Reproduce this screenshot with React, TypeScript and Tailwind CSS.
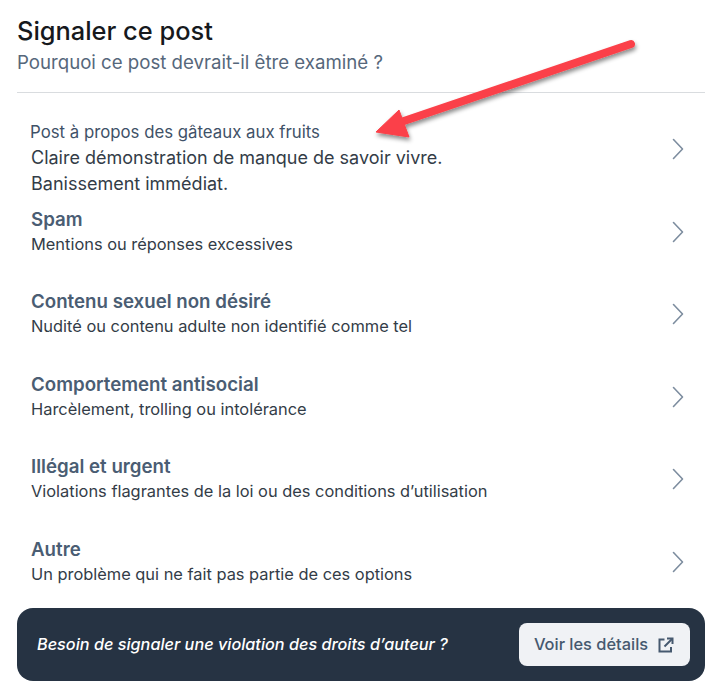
import React from "react";

const rows = [
  ["Spam", "Mentions ou réponses excessives"],
  ["Contenu sexuel non désiré", "Nudité ou contenu adulte non identifié comme tel"],
  ["Comportement antisocial", "Harcèlement, trolling ou intolérance"],
  ["Illégal et urgent", "Violations flagrantes de la loi ou des conditions d’utilisation"],
  ["Autre", "Un problème qui ne fait pas partie de ces options"],
];

function Chevron({ className }: { className: string }) {
  return (
    <svg width="24" height="24" viewBox="0 0 24 24" fill="none" stroke="#7d8d9f" strokeWidth="1.6" strokeLinecap="round" strokeLinejoin="round" className={className}>
      <path d="M7.5 2.5 L16.5 12 L7.5 21.5" />
    </svg>
  );
}

export default function App() {
  return (
    <div className="relative w-[719px] h-[696px] bg-white overflow-hidden font-['Inter',sans-serif] px-[17px] pt-[15px]">
      <h1 className="text-[25.4px] leading-[32px] font-medium text-[#16191d]">Signaler ce post</h1>
      <p className="text-[18.65px] leading-[26px] mt-[2px] text-[#56677b]">Pourquoi ce post devrait-il être examiné ?</p>
      <div className="h-px bg-[#d9dcdf] mt-[17px] w-[688px]" />

      <div className="flex items-center pl-[14px] pr-[12px] mt-[16px] h-[81px]">
        <div className="flex-1 self-start pt-[11px]">
          <div className="text-[16.8px] leading-[25px] text-[#3f5268] -ml-px">Post à propos des gâteaux aux fruits</div>
          <div className="text-[18px] leading-[26px] text-[#333c47]">Claire démonstration de manque de savoir vivre.</div>
          <div className="text-[18px] leading-[26px] text-[#333c47]">Banissement immédiat.</div>
        </div>
        <Chevron className="shrink-0 mb-[2px]" />
      </div>

      <div className="flex flex-col">
        {rows.map(([t, d]) => (
          <div key={t} className="flex items-center pl-[14px] pr-[12px] h-[82.5px]">
            <div className="flex-1">
              <div className="text-[18.7px] leading-[26px] font-semibold text-[#4a5d73]">{t}</div>
              <div className="text-[16.4px] leading-[23px] text-[#333c47]">{d}</div>
            </div>
            <Chevron className="shrink-0 mt-[1px]" />
          </div>
        ))}
      </div>

      <div className="flex items-center justify-between h-[73px] w-[688px] rounded-[16px] bg-[#263343] pl-[20px] pr-[15px] absolute left-[17px] top-[608px]">
        <span className="text-[16.25px] italic font-medium text-white [font-feature-settings:'cv11']">Besoin de signaler une violation des droits d’auteur ?</span>
        <div className="flex items-center gap-[9px] h-[43px] w-[171px] justify-center rounded-[8px] bg-[#f0f2f5] text-[#46596f] text-[16.4px] font-medium">
          Voir les détails
          <svg width="18" height="18" viewBox="0 0 18 18" fill="none" stroke="#46596f" strokeWidth="2">
            <path d="M7.5 3.5 H2.5 V15.5 H14 V11" />
            <path d="M7.5 10.5 L15 3" />
            <path d="M10 2.5 H15.5 V8" />
          </svg>
        </div>
      </div>

      <svg className="absolute left-0 top-0 pointer-events-none" width="719" height="696" viewBox="0 0 719 696" fill="none">
        <defs>
          <filter id="s" x="-10%" y="-20%" width="120%" height="150%">
            <feDropShadow dx="1" dy="3" stdDeviation="2" floodColor="#000" floodOpacity="0.45" />
          </filter>
        </defs>
        <g filter="url(#s)">
          <path d="M631 44 L398 123" stroke="#fb4048" strokeWidth="8" strokeLinecap="round" />
          <path d="M376 132 L399 110 L409 137 Z" fill="#fb4048" stroke="#fb4048" strokeWidth="1" strokeLinejoin="round" />
        </g>
      </svg>
    </div>
  );
}
